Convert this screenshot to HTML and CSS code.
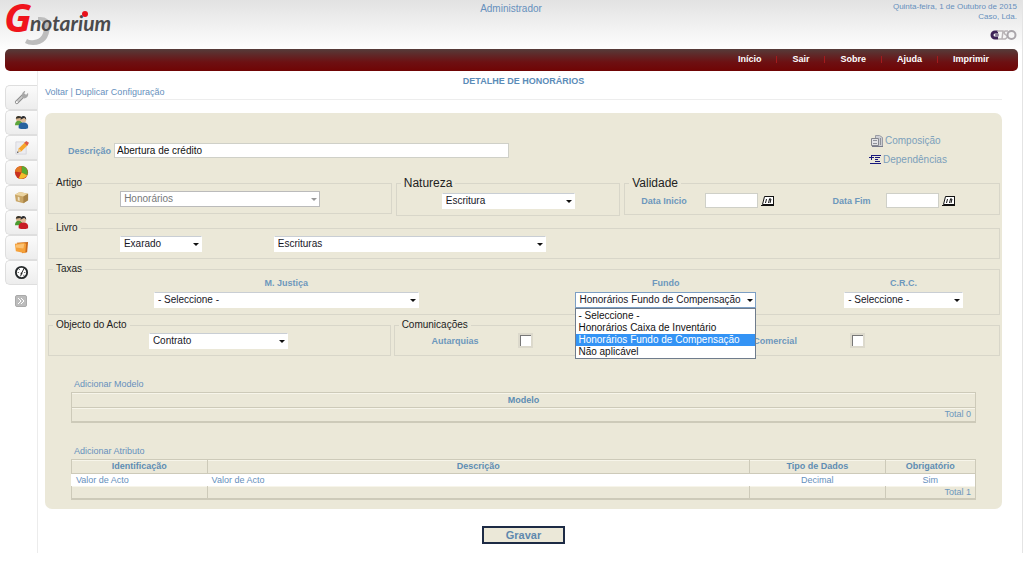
FILE: index.html
```html
<!DOCTYPE html>
<html lang="pt">
<head>
<meta charset="utf-8">
<title>Gnotarium - Detalhe de Honorários</title>
<link rel="stylesheet" href="styles.css">
</head>
<body>
<div class="page">
  <header class="top">
    <svg class="logo" viewBox="0 0 120 48" width="120" height="48" role="img" aria-label="Gnotarium">
      <path d="M38 17Q50 16 50 26Q49 45 33 45Q28 45 25 43L27 39Q30 41 34 40Q44 39 44 26Q43 19 38 20z" fill="#bdbdbd"/>
      <text x="4" y="32" class="logo-g">G</text>
      <text x="30" y="31" class="logo-name">notarium</text>
      <circle cx="85" cy="14" r="3" fill="#e8101a"/>
    </svg>
    <span class="user">Administrador</span>
    <div class="stamp">
      <span>Quinta-feira, 1 de Outubro de 2015</span>
      <span>Caso, Lda.</span>
      <svg class="caso" viewBox="0 0 28 12" width="28" height="12" role="img" aria-label="Caso">
        <path d="M9 3H6a3 3 0 0 0 0 6h3" fill="none" stroke="#3d2358" stroke-width="3"/>
        <circle cx="8" cy="6" r="2" fill="#8b7f99"/>
        <path d="M8 2h6l-1 8H9M19 2h-3q-2 2 1 4t-1 4h-3" fill="none" stroke="#b9b4b6" stroke-width="1.5"/>
        <ellipse cx="22.500" cy="6" rx="4" ry="4" fill="none" stroke="#aaa6ab" stroke-width="2"/>
      </svg>
    </div>
  </header>
  <nav class="menu">
    <a href="#">Início</a><a href="#">Sair</a><a href="#">Sobre</a><a href="#">Ajuda</a><a href="#">Imprimir</a>
  </nav>
  <div class="body">
    <aside class="side">
      <a class="tab" href="#" aria-label="Ferramentas"><svg viewBox="0 0 16 16"><path d="M3 13L10 6" stroke="#8d8d8d" stroke-width="4" stroke-linecap="round"/><path d="M3 13L10 6" stroke="#c9c9c9" stroke-width="2" stroke-linecap="round"/><path d="M9 8Q7 4 11 1l1 0-1 3 2 1 2-2q1 5-4 6z" fill="#a8a8a8"/><circle cx="3" cy="13" r="1" fill="#fff"/></svg></a>
      <a class="tab" href="#" aria-label="Clientes"><svg viewBox="0 0 16 16"><circle cx="5" cy="4" r="3" fill="#d9b48c"/><path d="M2 4q0-3 3-3t3 2z" fill="#35332b"/><path d="M1 11q0-5 4-5t5 5z" fill="#5ea63c"/><circle cx="10" cy="5" r="3" fill="#e0bd98"/><path d="M7 5q0-4 3-4t3 4l-2-2z" fill="#292b30"/><path d="M5 14q-1-6 5-6t5 6q-5 2-10 0z" fill="#28639f"/></svg></a>
      <a class="tab" href="#" aria-label="Editar"><svg viewBox="0 0 16 16"><path d="M2 2h9l2 3v10H2z" fill="#ececf0" stroke="#d5d5dc"/><path d="M4 13l1-4 7-7 3 3-7 7z" fill="#f6a52b"/><path d="M11 3l2-2 3 2-2 3z" fill="#dc5a4a"/><path d="M4 13l1-4 3 3z" fill="#eccf9f"/><path d="M3 14l1-2 1 1z" fill="#333"/></svg></a>
      <a class="tab" href="#" aria-label="Estatísticas"><svg viewBox="0 0 16 16"><circle cx="8" cy="8" r="7" fill="#c8311e"/><path d="M8 8V1a7 7 0 0 1 6 10z" fill="#5aab30"/><path d="M8 8l6 3a7 7 0 0 1-9 3z" fill="#f2be2c"/><path d="M8 8V1a7 7 0 0 0-7 6z" fill="#e27924"/></svg></a>
      <a class="tab" href="#" aria-label="Caixa"><svg viewBox="0 0 16 16"><path d="M1 5l5-3 9 2v7l-5 3-8-2z" fill="#c9a565"/><path d="M1 5l5-3 9 2-5 3z" fill="#ecd5a2"/><path d="M10 7l5-3v7l-5 3z" fill="#a88346"/><path d="M4 7l2 1v4l-2-1z" fill="#eee2c5"/></svg></a>
      <a class="tab" href="#" aria-label="Utilizadores"><svg viewBox="0 0 16 16"><circle cx="5" cy="4" r="3" fill="#d9b48c"/><path d="M2 4q0-3 3-3t3 2z" fill="#35332b"/><path d="M1 11q0-5 4-5t5 5z" fill="#4b9b30"/><circle cx="10" cy="5" r="3" fill="#e0bd98"/><path d="M7 5q0-4 3-4t3 4l-2-2z" fill="#292b30"/><path d="M5 14q-1-6 5-6t5 6q-5 2-10 0z" fill="#c81c24"/></svg></a>
      <a class="tab" href="#" aria-label="Pastas"><svg viewBox="0 0 16 16"><path d="M3 3l12-1-1 11-5 1z" fill="#c96a1b"/><path d="M1 4l9-1 3 1-1 10-10-2z" fill="#f5a13a"/><path d="M2 5l9-1-1 5-8-1z" fill="#fbc274"/></svg></a>
      <a class="tab" href="#" aria-label="Relógio"><svg viewBox="0 0 16 16"><circle cx="8" cy="8" r="6" fill="#fff" stroke="#25292b" stroke-width="2"/><path d="M8 9l3-6M8 9L7 12M4 8h1M11 8h1M5 4l1 1M11 11l-1 0" stroke="#222" stroke-width="1"/><circle cx="8" cy="9" r="1" fill="#222"/></svg></a>
      <button class="expand" type="button" aria-label="Expandir"><svg viewBox="0 0 10 10" width="10" height="10"><path d="M2 2l3 3-3 3M5 2l3 3-3 3" fill="none" stroke="#fff"/></svg></button>
    </aside>
    <main class="main">
      <h1>DETALHE DE HONORÁRIOS</h1>
      <div class="crumbs"><a href="#">Voltar</a> | <a href="#">Duplicar Configuração</a></div>
      <form>
        <div class="panel">
          <div class="intro">
            <label class="cap" for="desc">Descrição</label>
            <input id="desc" class="text" type="text" value="Abertura de crédito">
            <div class="links">
              <a href="#" class="comp"><svg viewBox="0 0 14 14" width="14" height="14"><path d="M5.500 1.500h4l3 2v9h-7z" fill="#cdced3" stroke="#9a9ca4"/><path d="M1.500 4.500h7v7h-7z" fill="#e3e3e6" stroke="#85878e"/><path d="M3 6.500h4M3 9.500h4M10.500 4v7" stroke="#8f929a"/><path d="M2 12.500h11" stroke="#77798a"/></svg>Composição</a>
              <a href="#"><svg viewBox="0 0 14 14" width="14" height="14"><path d="M3 2.500h10M7 4.500h5M7 6.500h3M7 8.500h5M2 10.500h11M1 4.500h5" stroke="#18187c"/><path d="M3.500 2v5" stroke="#18187c"/></svg>Dependências</a>
            </div>
          </div>
          <div class="row three">
            <fieldset>
              <legend>Artigo</legend>
              <div class="line artigo"><span class="pick off"><select aria-label="Artigo" disabled><option>Honorários</option></select></span></div>
            </fieldset>
            <fieldset class="big">
              <legend>Natureza</legend>
              <div class="line natureza"><span class="pick"><select aria-label="Natureza"><option>Escritura</option></select></span></div>
            </fieldset>
            <fieldset class="big">
              <legend>Validade</legend>
              <div class="line validade">
                <label class="cap" for="ini">Data Inicio</label>
                <input id="ini" class="text" type="text">
                <button class="cal" type="button" aria-label="Escolher data inicial"><svg viewBox="0 0 14 12" width="14" height="12"><path d="M3.500 1.500h9v8h-11z" fill="#fff" stroke="#111"/><path d="M12.500 1v10M0 10.500h13M5.500 4l-1 4M8.500 4l-1 4M8 4h2l-1 4" fill="none" stroke="#111"/></svg></button>
                <label class="cap" for="fim">Data Fim</label>
                <input id="fim" class="text" type="text">
                <button class="cal" type="button" aria-label="Escolher data final"><svg viewBox="0 0 14 12" width="14" height="12"><path d="M3.500 1.500h9v8h-11z" fill="#fff" stroke="#111"/><path d="M12.500 1v10M0 10.500h13M5.500 4l-1 4M8.500 4l-1 4M8 4h2l-1 4" fill="none" stroke="#111"/></svg></button>
              </div>
            </fieldset>
          </div>
          <div class="row">
            <fieldset>
              <legend>Livro</legend>
              <div class="line livro">
                <span class="pick"><select aria-label="Estado do livro"><option>Exarado</option></select></span>
                <span class="pick"><select aria-label="Livro"><option>Escrituras</option></select></span>
              </div>
            </fieldset>
          </div>
          <div class="row">
            <fieldset>
              <legend>Taxas</legend>
              <div class="line taxas">
                <div class="tax"><label class="cap" for="mj">M. Justiça</label><span class="pick"><select id="mj"><option>- Seleccione -</option></select></span></div>
                <div class="tax"><label class="cap" for="fundo">Fundo</label><span class="pick open"><select id="fundo"><option>Honorários Fundo de Compensação</option></select>
                  <ul class="list" role="listbox" aria-label="Fundo">
                    <li role="option">- Seleccione -</li>
                    <li role="option">Honorários Caixa de Inventário</li>
                    <li role="option" class="on" aria-selected="true">Honorários Fundo de Compensação</li>
                    <li role="option">Não aplicável</li>
                  </ul></span></div>
                <div class="tax"><label class="cap" for="crc">C.R.C.</label><span class="pick"><select id="crc"><option>- Seleccione -</option></select></span></div>
              </div>
            </fieldset>
          </div>
          <div class="row two">
            <fieldset>
              <legend>Objecto do Acto</legend>
              <div class="line objecto"><span class="pick"><select aria-label="Objecto do Acto"><option>Contrato</option></select></span></div>
            </fieldset>
            <fieldset>
              <legend>Comunicações</legend>
              <div class="line comunica">
                <label class="cap" for="aut">Autarquias</label><input id="aut" class="check" type="checkbox">
                <label class="cap end" for="com">Comercial</label><input id="com" class="check" type="checkbox">
              </div>
            </fieldset>
          </div>
          <section class="grid">
            <a href="#">Adicionar Modelo</a>
            <table class="models">
              <thead><tr><th>Modelo</th></tr></thead>
              <tfoot><tr><td class="total">Total 0</td></tr></tfoot>
            </table>
          </section>
          <section class="grid">
            <a href="#">Adicionar Atributo</a>
            <table>
              <colgroup><col class="c15"><col class="c60"><col class="c15"><col class="c10"></colgroup>
              <thead><tr><th>Identificação</th><th>Descrição</th><th>Tipo de Dados</th><th>Obrigatório</th></tr></thead>
              <tbody><tr><td><a href="#">Valor de Acto</a></td><td><a href="#">Valor de Acto</a></td><td class="mid">Decimal</td><td class="mid">Sim</td></tr></tbody>
              <tfoot><tr><td></td><td></td><td></td><td class="total">Total 1</td></tr></tfoot>
            </table>
          </section>
        </div>
        <div class="actions"><button class="save" type="button">Gravar</button></div>
      </form>
    </main>
  </div>
</div>
</body>
</html>
```
FILE: styles.css
```css
* { box-sizing: border-box; }
body {
  margin: 0;
  background: #fff;
  color: #6690bd;
  font: 9px/12px "Liberation Sans", Arial, sans-serif;
}
a { color: inherit; text-decoration: none; }
input, select, button { font: inherit; margin: 0; }

.page { margin-right: 1px; border-right: 1px solid #e4e4e4; }

.top {
  display: grid;
  grid-template-columns: 1fr auto 1fr;
  align-items: start;
  padding-right: 5px;
  background: linear-gradient(#e2e2e2, #fdfdfd 48px);
}
.logo { display: block; overflow: visible; margin-bottom: 1px; }
.logo-g { font: italic 700 40px "Open Sans", sans-serif; fill: #f0141c; }
.logo-name { font: italic 700 21px Lato, sans-serif; fill: #4a4a4c; }
.user { padding: 3px 0 0 5px; font-size: 10px; }
.stamp {
  display: flex;
  flex-direction: column;
  align-items: flex-end;
  padding-top: 2px;
  font-size: 8px;
  line-height: 10px;
}
.caso { margin-top: 7px; }

.menu {
  display: flex;
  justify-content: flex-end;
  align-items: center;
  margin: 0 4px 0 5px;
  padding: 7px 14px 8px 0;
  border-radius: 5px;
  background: linear-gradient(#553c3a, #6d1012 60%, #700404);
  color: #fff;
  font-weight: 700;
  line-height: 7px;
}
.menu a { padding: 0 15px; }
.menu a + a { border-left: 1px solid #a51a1c; }

.body { display: flex; }
.side {
  flex: none;
  width: 38px;
  padding: 14px 0 0 5px;
  border-right: 1px solid #ececec;
}
.tab {
  display: flex;
  align-items: center;
  justify-content: center;
  height: 25px;
  border: 1px solid #dedede;
  border-right: 0;
  border-radius: 5px 0 0 5px;
  background: linear-gradient(#fbfbfb, #ededed);
}
.tab svg { width: 15px; height: 15px; fill: none; }
.expand {
  display: flex;
  margin: 10px auto 0;
  padding: 0;
  border: 1px solid #aaa;
  border-radius: 2px;
  background: #bcbcbc;
}

.main { flex: 1; min-width: 0; padding: 4px 20px 9px 7px; }
h1 { margin: 0; font-size: 9px; line-height: 12px; text-align: center; color: #5b8cb8; }
.crumbs { padding-bottom: 1px; border-bottom: 1px solid #ededed; line-height: 11px; }

.panel {
  margin-top: 13px;
  padding: 20px 2px 9px 3px;
  border-radius: 7px;
  background: #ebe8d8;
}
.cap { color: #6d97bc; font-weight: 700; }
.text {
  min-width: 0;
  height: 15px;
  padding: 0 2px;
  border: 1px solid #cfd0c8;
  background: #fff;
  color: #111;
  font-size: 10px;
}
.intro {
  display: grid;
  grid-template-columns: 66fr 395fr 359fr 132fr;
  align-items: center;
  margin-bottom: 9px;
}
.intro .cap { padding-right: 3px; text-align: right; }
.links {
  grid-column: 4;
  display: flex;
  flex-direction: column;
  gap: 3px;
  font-size: 10px;
  color: #7b9fbb;
}
.links a { display: flex; align-items: center; gap: 1px; line-height: 16px; }
.links .comp { padding-left: 2px; }

.row { display: grid; margin-bottom: 4px; }
.three { grid-template-columns: 343fr 224fr 375fr; gap: 4px; align-items: start; margin-bottom: 6px; }
.two { grid-template-columns: 343fr 607fr; gap: 3px; }
fieldset {
  min-width: 0;
  margin: 0;
  padding: 2px 0 6px;
  border: 1px solid #d8d6c9;
}
legend {
  margin-left: 4px;
  padding: 0 3px;
  color: #222;
  font-size: 10px;
  line-height: 12px;
}
.big { padding-top: 4px; }
.big legend { font-size: 12px; }

.line { display: grid; align-items: center; }
.artigo { grid-template-columns: 71fr 199fr 71fr; }
.natureza { grid-template-columns: 45fr 133fr 44fr; }
.livro { grid-template-columns: 71fr 82fr 72fr 273fr 453fr; }
.objecto { grid-template-columns: 100fr 139fr 102fr; }
.artigo .pick, .natureza .pick, .objecto .pick, .livro .pick:first-child { grid-column: 2; }
.livro .pick:last-child { grid-column: 4; }
.validade { grid-template-columns: 80fr 53fr 58fr 69fr 53fr 60fr; }
.validade .cap { padding-left: 16px; white-space: nowrap; }
.cal { display: flex; padding: 0 0 0 3px; border: 0; background: none; }
.comunica { grid-template-columns: 37fr 87fr 15fr 265fr 53fr 150fr; }
.comunica .cap { grid-column: 2; }
.comunica .cap.end { grid-column: 4; text-align: right; }
.comunica .cap.end + .check { grid-column: 6; }

.taxas { grid-template-columns: 105fr 265fr 157fr 181fr 88fr 119fr 36fr; }
.tax { display: grid; grid-column: 2; gap: 3px; text-align: center; }
.tax:nth-child(2) { grid-column: 4; }
.tax:nth-child(3) { grid-column: 6; }

.pick { position: relative; display: block; }
.pick select {
  display: block;
  width: 100%;
  height: 16px;
  padding: 0 14px 0 3px;
  border: 1px solid #fff;
  border-top-color: #c9ced4;
  border-radius: 0;
  background: #fff;
  color: #17171f;
  font-size: 10px;
  appearance: none;
}
.pick::after {
  content: "";
  position: absolute;
  right: 3px;
  top: 7px;
  border: 3px solid transparent;
  border-top-color: #111;
  border-bottom: 0;
  pointer-events: none;
}
.pick.off select { border-color: #bbb; color: #777; opacity: 1; }
.off::after { border-top-color: #999; }
.pick.open select { border-color: #7c9fc4; }
.list {
  position: absolute;
  z-index: 2;
  top: 16px;
  left: 0;
  right: 0;
  margin: 0;
  padding: 1px 0 0;
  border: 1px solid #6f7c8c;
  background: #fff;
  color: #111;
  font-size: 10px;
  text-align: left;
  list-style: none;
}
.list li { padding-left: 2px; white-space: nowrap; }
.list .on { background: #3393f5; color: #fff; }

.check {
  width: 15px;
  height: 15px;
  border: 2px solid #dcd9cc;
  background: #fff;
  box-shadow: inset 1px 1px 0 #777;
  appearance: none;
}

.grid { margin: 22px 24px 0 23px; }
.grid > a { display: block; padding: 0 3px 2px; }
table {
  width: 100%;
  table-layout: fixed;
  border-collapse: collapse;
  border: 1px solid #cdcab9;
  border-bottom-width: 2px;
}
.c15 { width: 15%; }
.c60 { width: 60%; }
.c10 { width: 10%; }
th, td { height: 13px; padding: 0 4px; border: 0 solid #cdcab9; border-left-width: 1px; }
th { height: 14px; border-bottom-width: 1px; color: #5e8db3; box-shadow: inset 0 1px #f7f5ea; }
.models th { height: 15px; }
.models td { height: 14px; }
tbody td { border-left-color: #fff; background: #fff; }
tfoot td { box-shadow: inset 0 1px #f7f5ea; }
.mid { text-align: center; }
.total { text-align: right; color: #6d97bc; }

.actions { padding-top: 17px; text-align: center; }
.save {
  width: 83px;
  height: 18px;
  padding: 0;
  border: 2px solid #1d2b45;
  background: #ebe8d8;
  color: #5f89ae;
  font-size: 11px;
  font-weight: 700;
}
```
